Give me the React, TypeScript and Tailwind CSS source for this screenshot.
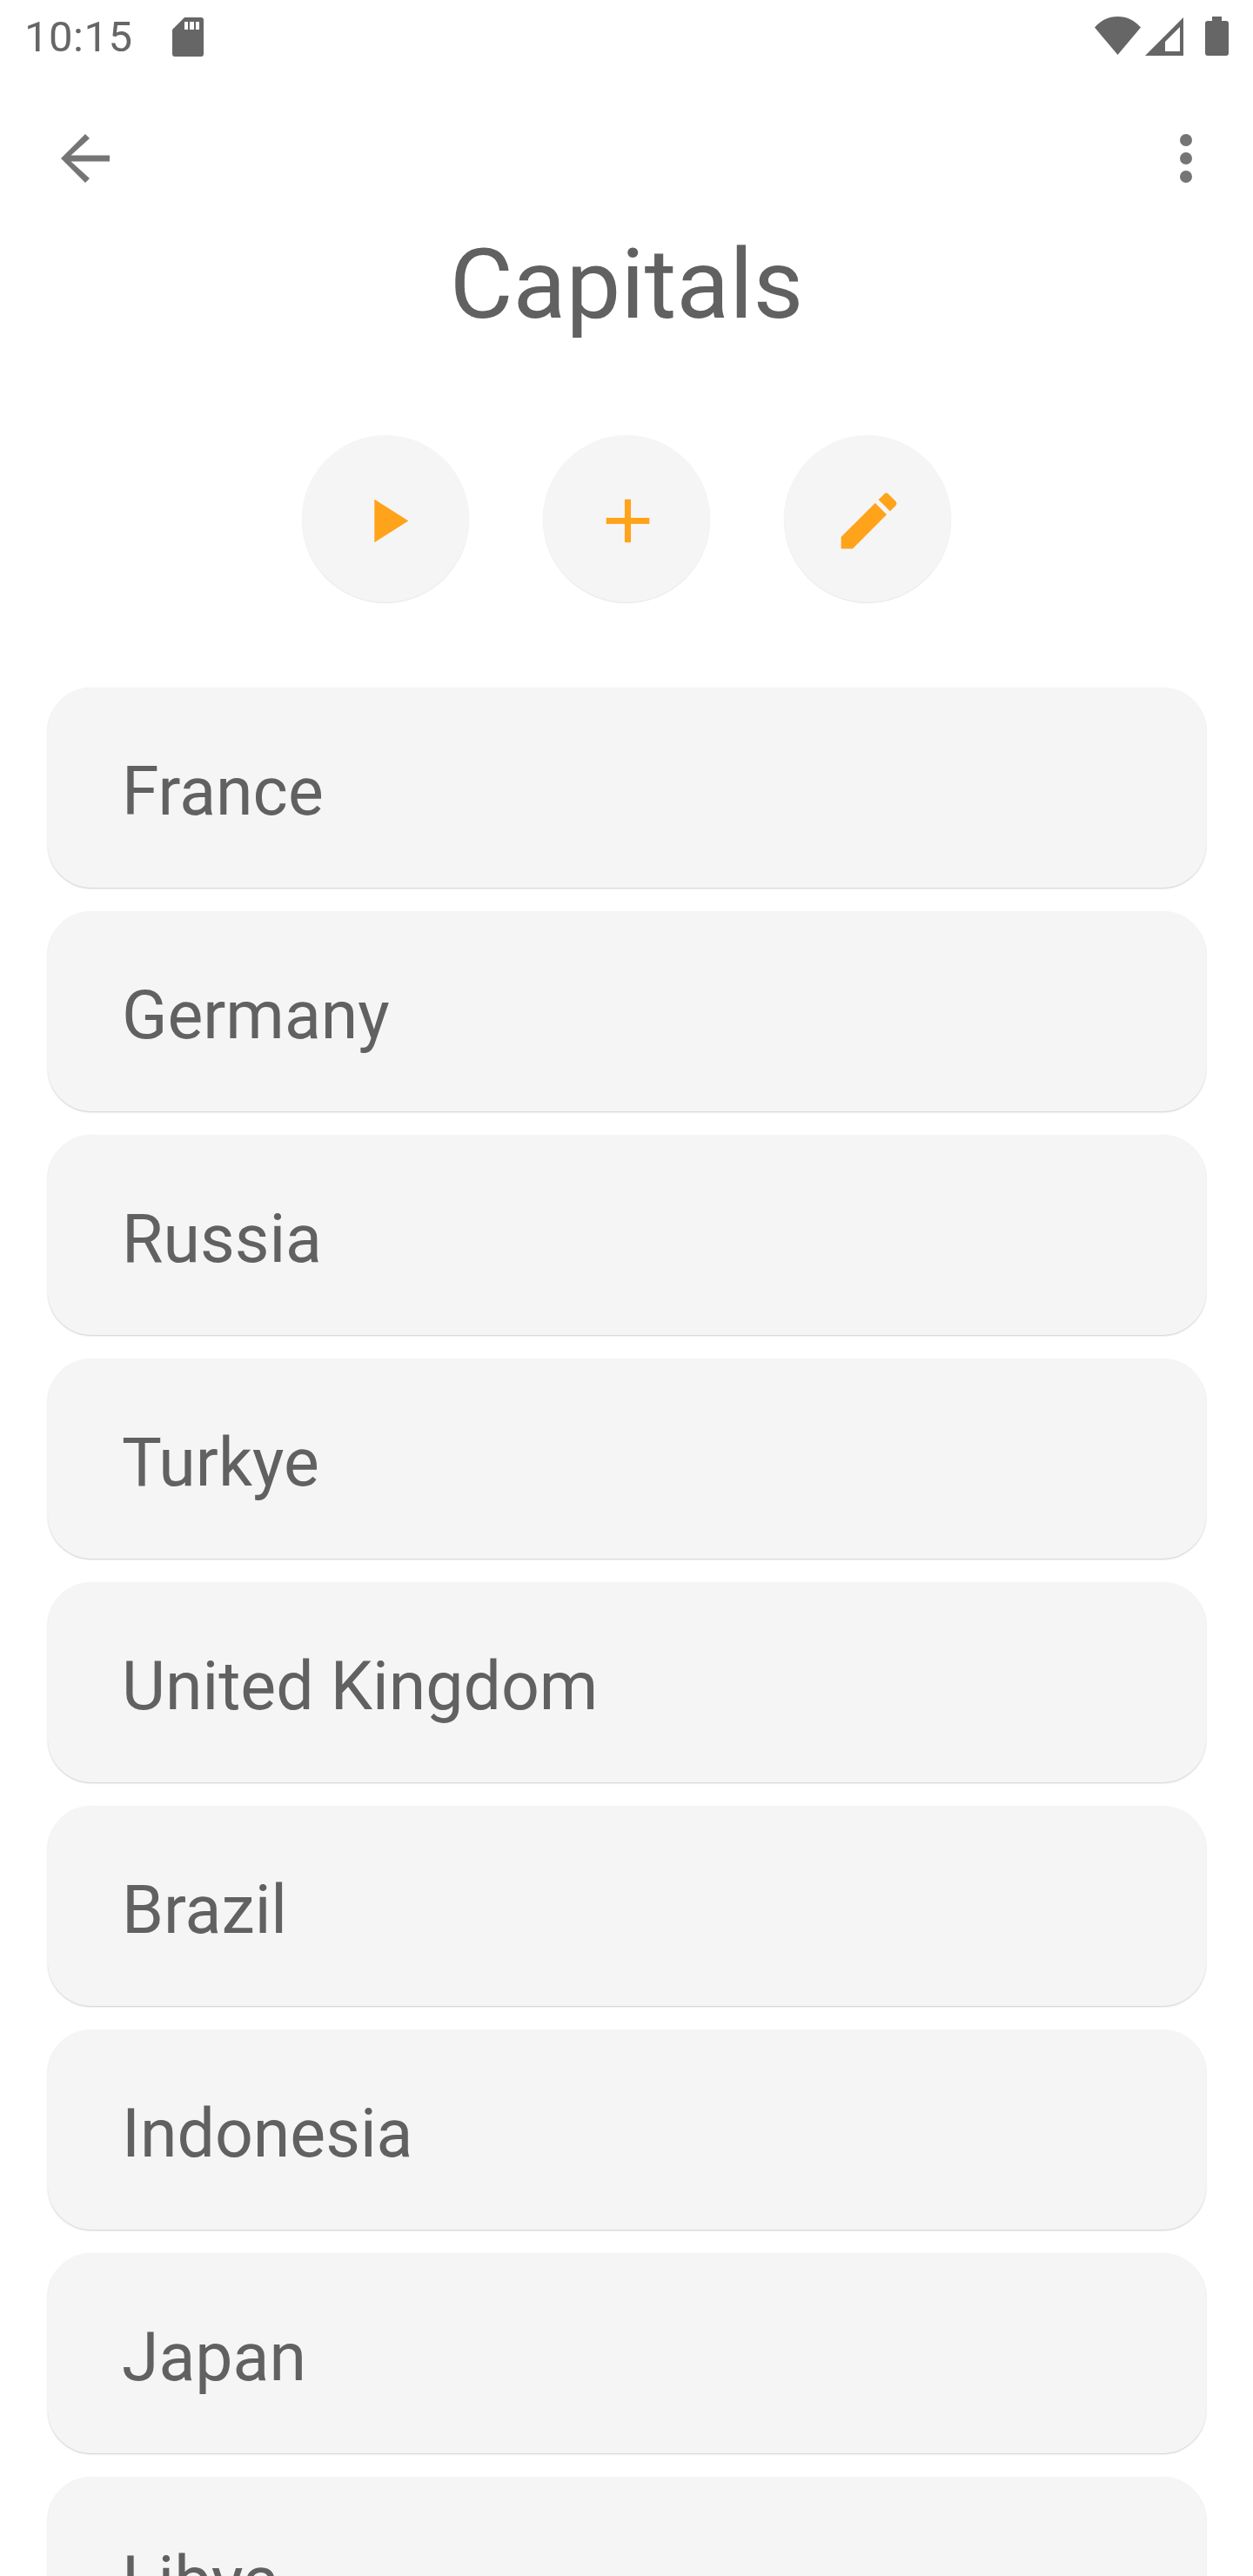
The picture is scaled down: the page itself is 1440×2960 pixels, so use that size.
const countries = [
  "France",
  "Germany",
  "Russia",
  "Turkye",
  "United Kingdom",
  "Brazil",
  "Indonesia",
  "Japan",
  "Libya",
];

const actions = [
  { name: "play", d: "M8 5v14l11-7z" },
  { name: "add", d: "M19 13h-6v6h-2v-6H5v-2h6V5h2v6h6v2z" },
  {
    name: "edit",
    d: "M3 17.25V21h3.75L17.81 9.94l-3.75-3.75L3 17.25zM20.71 7.04c.39-.39.39-1.02 0-1.41l-2.34-2.34c-.39-.39-1.02-.39-1.41 0l-1.83 1.83 3.75 3.75 1.83-1.83z",
  },
];

function StatusBar() {
  return (
    <div className="flex h-[140px] items-start justify-between pl-[28px] pr-[28px] pt-[19px] text-[#666666]">
      <div className="flex items-start">
        <span className="text-[49px] leading-[48px] tracking-[0.5px]">10:15</span>
        {/* sd card */}
        <svg className="ml-[45px] mt-[1px]" width="36" height="45" viewBox="0 0 36 45" fill="currentColor">
          <path fillRule="evenodd" d="M14 0h19a3 3 0 0 1 3 3v39a3 3 0 0 1-3 3H3a3 3 0 0 1-3-3V14zM14 5v9h4V5zM20 5v9h5V5zM27 5v9h4V5z" />
        </svg>
      </div>
      <div className="flex items-start">
        {/* wifi */}
        <svg width="53" height="44" viewBox="0 0 53 44" fill="currentColor">
          <path d="M0 12.5C7 4.5 16 0 26.5 0S46 4.5 53 12.5L26.5 44z" />
        </svg>
        {/* signal */}
        <svg className="ml-[5px] mt-[1px]" width="44" height="44" viewBox="0 0 44 44" fill="currentColor">
          <path fillRule="evenodd" d="M44 0v44H0zM40 11L23 28v11h17z" />
        </svg>
        {/* battery */}
        <svg className="ml-[25px]" width="27" height="45" viewBox="0 0 27 45" fill="currentColor">
          <path d="M8 0h11v5h5a3 3 0 0 1 3 3v34a3 3 0 0 1-3 3H3a3 3 0 0 1-3-3V8a3 3 0 0 1 3-3h5z" />
        </svg>
      </div>
    </div>
  );
}

function Toolbar() {
  return (
    <div className="flex h-[84px] items-center justify-between pl-[70px] pr-[70px] text-[#757575]">
      <svg width="56" height="56" viewBox="0 0 56 56" fill="currentColor">
        <path d="M28 0l5 5L11.5 24.5H56v7H11.5L33 51l-5 5L0 28z" />
      </svg>
      <div className="flex flex-col gap-[7px]">
        <span className="h-[14px] w-[14px] rounded-full bg-[#757575]" />
        <span className="h-[14px] w-[14px] rounded-full bg-[#757575]" />
        <span className="h-[14px] w-[14px] rounded-full bg-[#757575]" />
      </div>
    </div>
  );
}

export default function App() {
  return (
    <div className="h-[2960px] overflow-hidden bg-white font-['Roboto',sans-serif] text-[#616161]">
      <StatusBar />
      <Toolbar />

      <h1 className="mt-[37px] text-center text-[112px] font-normal leading-[132px]">Capitals</h1>

      {/* Action buttons */}
      <div className="mt-[107px] flex justify-center gap-[85px]">
        {actions.map((action) => (
          <button
            key={action.name}
            className="flex h-[192px] w-[192px] items-center justify-center rounded-full bg-[#f5f5f5] shadow-[0_1px_1px_rgba(0,0,0,0.1)]"
          >
            <svg className="ml-[2px] mt-[4px]" width="85" height="85" viewBox="0 0 24 24" fill="#ffa31a">
              <path d={action.d} />
            </svg>
          </button>
        ))}
      </div>

      {/* Country list */}
      <div className="mt-[98px] flex flex-col gap-[27px] pl-[55px] pr-[54px]">
        {countries.map((country) => (
          <div
            key={country}
            className="flex h-[230px] shrink-0 items-center rounded-[50px] bg-[#f5f5f5] pl-[85px] pt-[10px] text-[77px] leading-[92px] shadow-[0_1px_2px_rgba(0,0,0,0.2)]"
          >
            {country}
          </div>
        ))}
      </div>
    </div>
  );
}
